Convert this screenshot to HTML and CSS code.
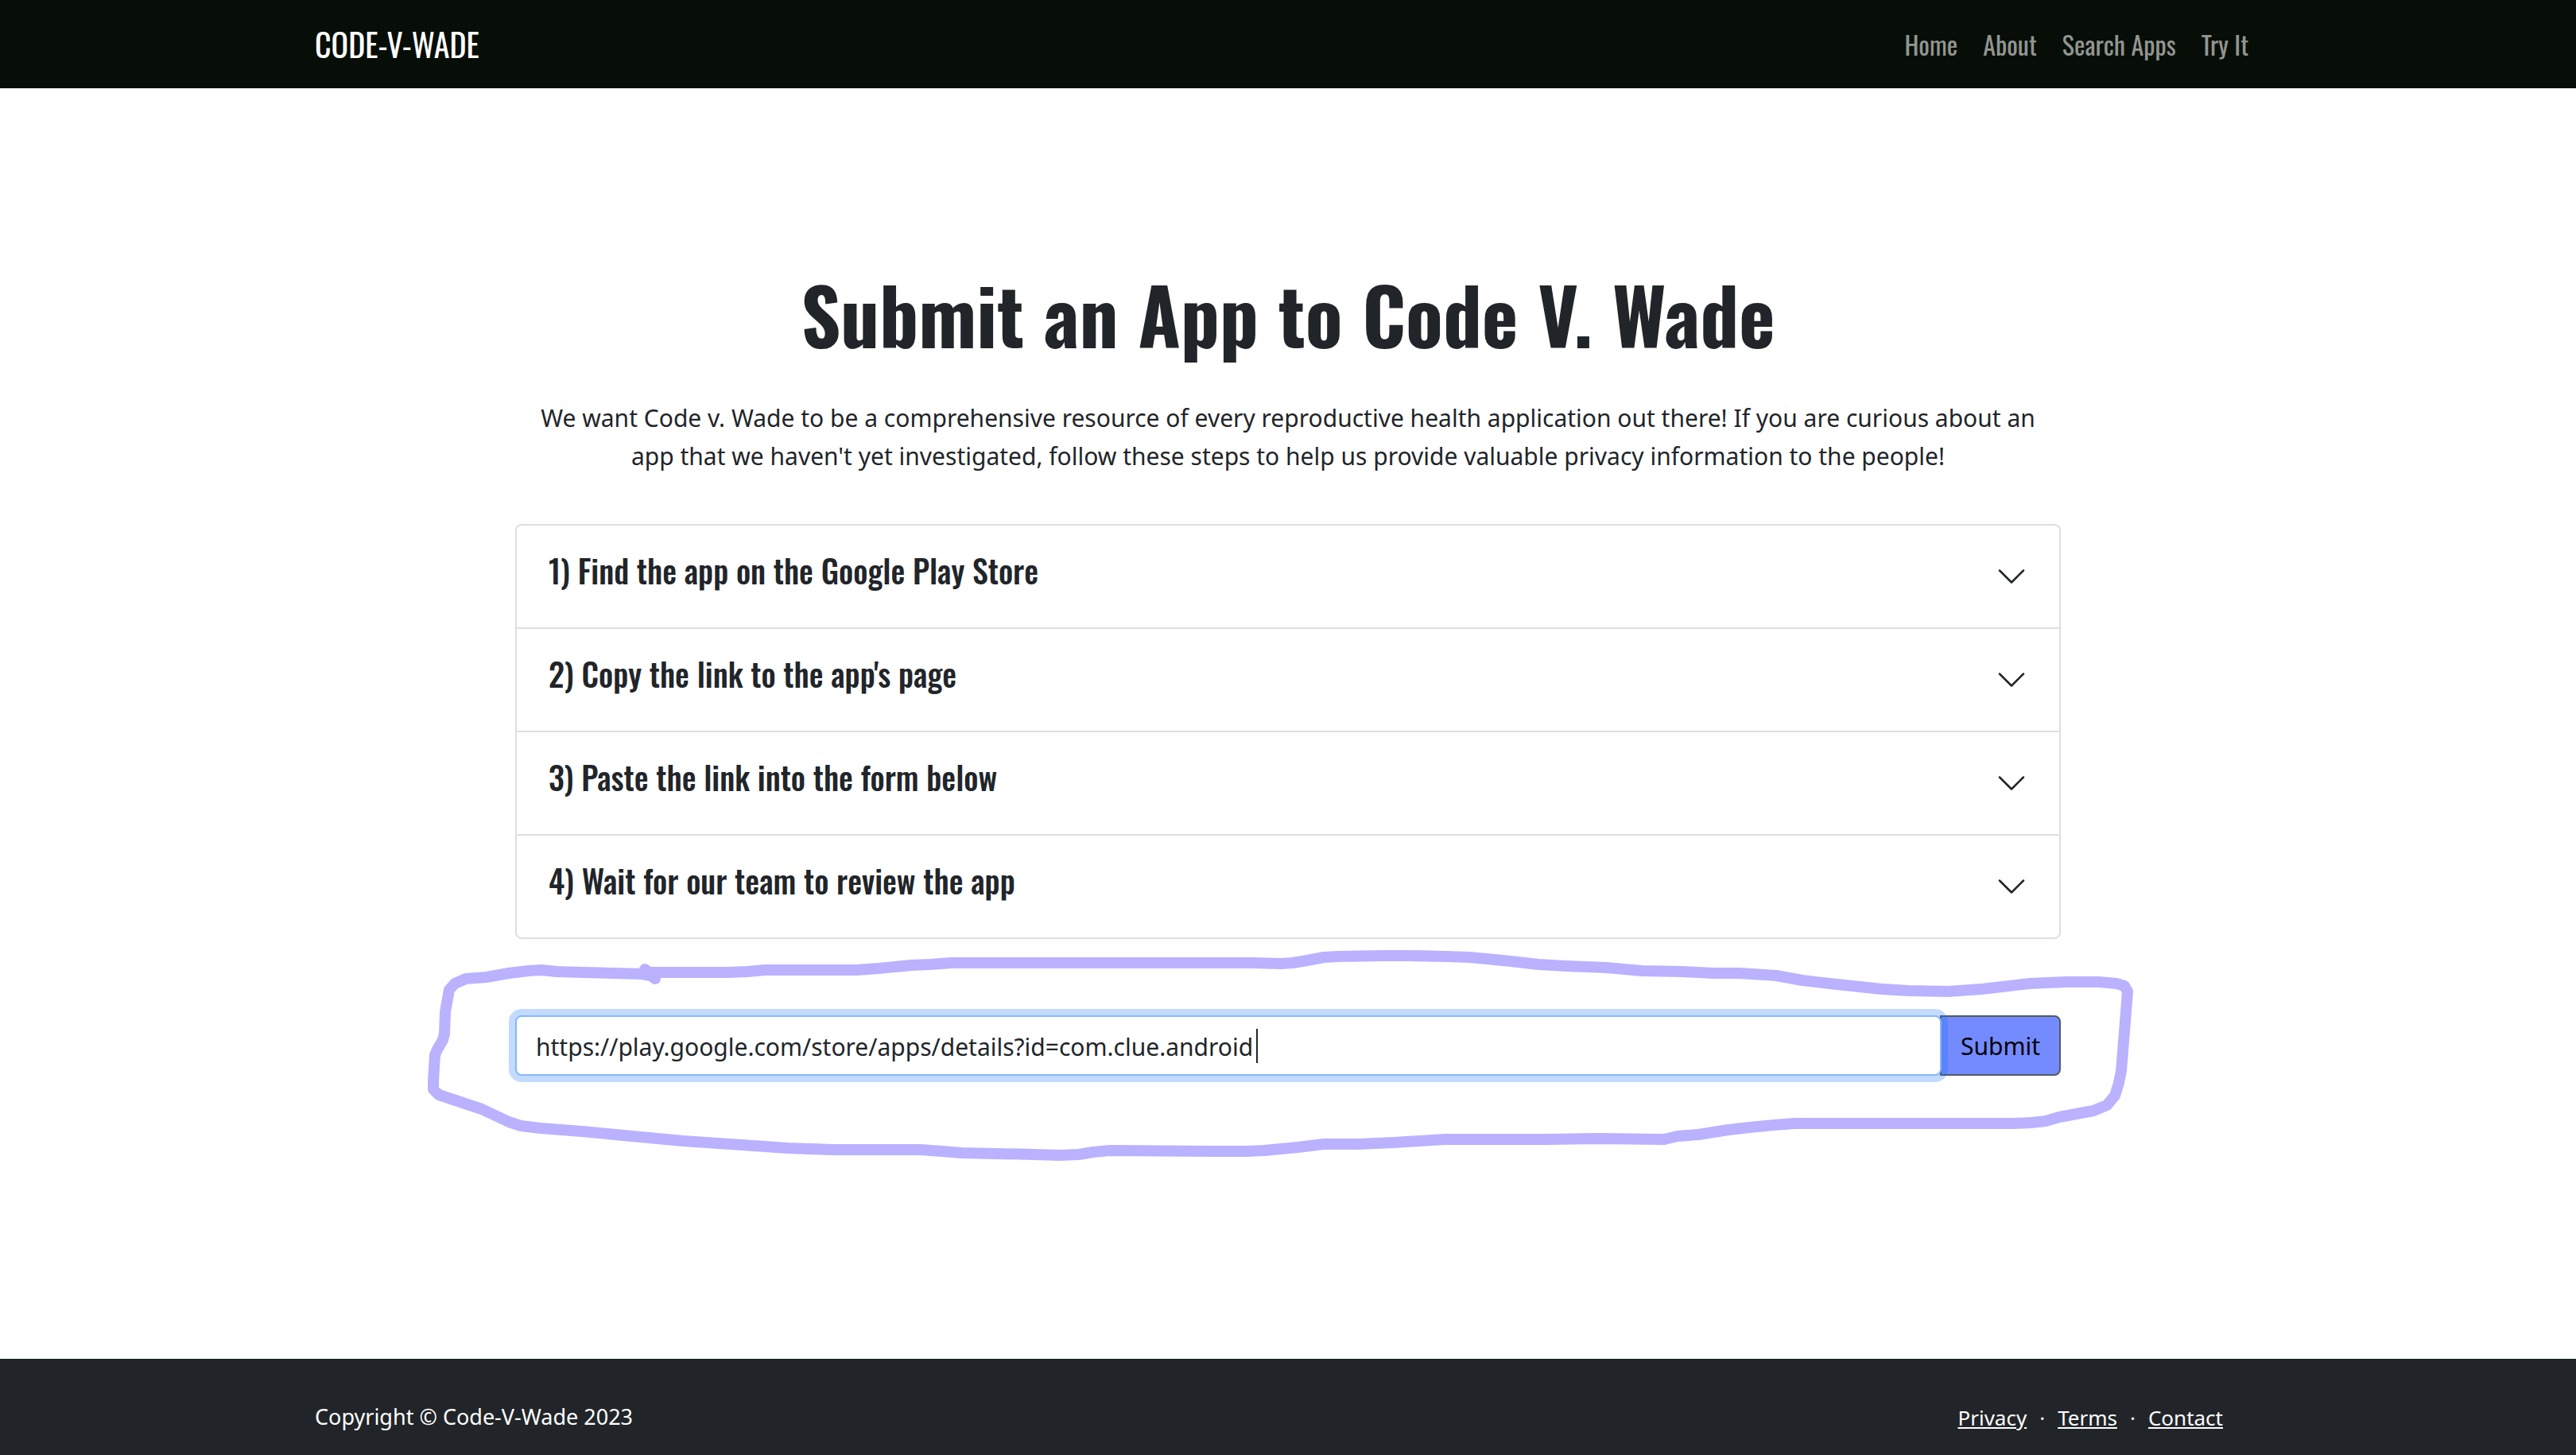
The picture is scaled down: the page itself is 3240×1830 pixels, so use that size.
FILE: index.html
```html
<!DOCTYPE html>
<html lang="en">
<head>
  <meta charset="utf-8">
  <meta name="viewport" content="width=device-width, initial-scale=1">
  <title>Submit an App - Code-V-Wade</title>
  <link rel="stylesheet" href="styles.css">
</head>
<body>
  <header class="navbar">
    <div class="container navbar-inner">
      <a class="brand" href="#">CODE-V-WADE</a>
      <nav class="nav-links">
        <a href="#">Home</a>
        <a href="#">About</a>
        <a href="#">Search Apps</a>
        <a href="#">Try It</a>
      </nav>
    </div>
  </header>

  <main class="content">
    <h1 class="title">Submit an App to Code V. Wade</h1>
    <p class="intro">We want Code v. Wade to be a comprehensive resource of every reproductive health application out there! If you are curious about an<br>app that we haven't yet investigated, follow these steps to help us provide valuable privacy information to the people!</p>

    <div class="accordion">
      <button class="accordion-item" type="button" aria-expanded="false">
        <span class="step">1) Find the app on the Google Play Store</span>
        <svg class="chevron" viewBox="0 0 16 16" aria-hidden="true"><path d="M2 5l6 6 6-6"/></svg>
      </button>
      <button class="accordion-item" type="button" aria-expanded="false">
        <span class="step">2) Copy the link to the app's page</span>
        <svg class="chevron" viewBox="0 0 16 16" aria-hidden="true"><path d="M2 5l6 6 6-6"/></svg>
      </button>
      <button class="accordion-item" type="button" aria-expanded="false">
        <span class="step">3) Paste the link into the form below</span>
        <svg class="chevron" viewBox="0 0 16 16" aria-hidden="true"><path d="M2 5l6 6 6-6"/></svg>
      </button>
      <button class="accordion-item" type="button" aria-expanded="false">
        <span class="step">4) Wait for our team to review the app</span>
        <svg class="chevron" viewBox="0 0 16 16" aria-hidden="true"><path d="M2 5l6 6 6-6"/></svg>
      </button>
    </div>

    <form class="submit-form">
      <input class="link-input" type="text" name="link" aria-label="Link to the app's page" value="https://play.google.com/store/apps/details?id=com.clue.android">
      <span class="caret" aria-hidden="true"></span>
      <button class="submit-button" type="submit">Submit</button>
      <svg class="highlight" viewBox="536 1190 2148 274" preserveAspectRatio="none" aria-hidden="true">
        <polyline points="811,1219 816,1223 916,1223 940,1222 962,1220 1077,1220 1105,1218 1146,1214 1170,1213 1197,1211 1574,1211 1612,1212 1626,1211 1644,1208 1665,1204 1683,1203 1740,1202 1772,1202 1820,1203 1848,1204 1870,1206 1900,1209 1935,1213 1970,1215 2021,1217 2065,1221 2116,1222 2155,1224 2187,1224 2234,1227 2267,1233 2310,1238 2367,1244 2400,1246 2450,1247 2493,1244 2553,1237 2575,1236 2600,1235 2640,1235 2662,1237 2672,1240 2676,1247 2673,1285 2668,1347 2665,1362 2660,1378 2650,1390 2633,1397 2590,1405 2573,1410 2555,1412 2533,1413 2257,1413 2231,1415 2200,1418 2174,1421 2136,1427 2110,1429 2093,1433 2008,1432 1944,1433 1817,1433 1753,1437 1708,1439 1664,1439 1632,1443 1590,1447 1568,1448 1530,1448 1396,1447 1375,1449 1357,1452 1332,1453 1300,1452 1209,1450 1185,1448 1157,1446 1048,1446 991,1444 933,1440 859,1435 795,1429 732,1423 680,1419 655,1416 640,1411 606,1395 552,1377 545,1370 545,1360 547,1327 550,1320 557,1308 559,1300 560,1273 565,1245 572,1237 586,1231 612,1229 640,1224 665,1221 681,1220 700,1222 732,1223 807,1225 818,1227 824,1231"/>
      </svg>
    </form>
  </main>

  <footer class="footer">
    <div class="container footer-inner">
      <div class="copyright">Copyright © Code-V-Wade 2023</div>
      <div class="footer-links">
        <a href="#">Privacy</a>
        <span>·</span>
        <a href="#">Terms</a>
        <span>·</span>
        <a href="#">Contact</a>
      </div>
    </div>
  </footer>
</body>
</html>
```
FILE: styles.css
```css
* {
  box-sizing: border-box;
}

body {
  display: flex;
  flex-direction: column;
  min-height: 100vh;
  margin: 0;
  color: #212529;
  background: #fff;
  font-family: "Segoe UI", "Noto Sans", sans-serif;
  font-size: 30px;
  line-height: 48px;
}

.container {
  width: 100%;
  max-width: 2640px;
  margin: 0 auto;
  padding: 0 96px;
  display: flex;
  justify-content: space-between;
}

.navbar {
  padding: 16px 0;
  background: #070e07;
}

.navbar-inner {
  align-items: center;
}

.brand,
.nav-links,
.title,
.step {
  font-family: "Oswald", "Liberation Sans Narrow", "Roboto", sans-serif;
}

.brand {
  color: #fff;
  font-size: 40px;
  line-height: 79px;
  text-decoration: none;
}

.nav-links {
  display: flex;
  gap: 32px;
  padding-right: 16px;
  font-size: 32px;
}

.nav-links a {
  color: #919591;
  text-decoration: none;
}

.content {
  flex: 1;
  width: 60%;
  margin: 0 auto;
  padding: 225px 0 96px;
}

.title {
  margin: 0 0 50px;
  font-size: 97px;
  font-weight: 700;
  line-height: 116px;
  text-align: center;
}

.intro {
  margin: 0 -24px 61px;
  text-align: center;
}

.accordion {
  display: flex;
  flex-direction: column;
  border: 2px solid #dedfe0;
  border-radius: 8px;
}

.accordion-item {
  display: flex;
  align-items: center;
  justify-content: space-between;
  height: 130px;
  padding: 0 40px;
  border: 0;
  border-bottom: 2px solid #dedfe0;
  background: none;
  color: inherit;
  text-align: left;
}

.accordion-item:last-child {
  height: 128px;
  border-bottom: 0;
}

.step {
  padding-bottom: 16px;
  font-size: 40px;
  font-weight: 500;
  line-height: 48px;
}

.chevron {
  width: 40px;
  height: 40px;
  fill: none;
  stroke: #212529;
  stroke-linecap: round;
  stroke-linejoin: round;
}

.submit-form {
  position: relative;
  display: flex;
  margin-top: 96px;
}

.link-input {
  position: relative;
  z-index: 1;
  flex: 1;
  min-width: 0;
  height: 76px;
  padding: 2px 24px 0;
  border: 2px solid #86b7fe;
  border-radius: 8px;
  outline: 0;
  box-shadow: 0 0 0 8px rgba(13, 110, 253, 0.25);
  background: #fff;
  color: #212529;
  font: inherit;
}

.caret {
  position: absolute;
  z-index: 1;
  top: 17px;
  left: 932px;
  width: 2px;
  height: 43px;
  background: #212529;
}

.submit-button {
  width: 152px;
  height: 76px;
  margin-left: -2px;
  padding: 2px 0 0;
  border: 2px solid #535b62;
  border-radius: 0 8px 8px 0;
  background: #748bff;
  color: #000;
  font: inherit;
}

.highlight {
  position: absolute;
  z-index: 2;
  top: -87px;
  left: -112px;
  width: calc(100% + 204px);
  height: 274px;
  fill: none;
  stroke: #bab2ff;
  stroke-width: 14px;
  stroke-linecap: round;
  stroke-linejoin: round;
  pointer-events: none;
}

.footer {
  padding: 49px 0 24px;
  background: #212529;
  color: #fff;
  font-size: 27px;
}

.footer-inner {
  align-items: center;
}

.footer-links {
  display: flex;
  gap: 16px;
  padding-top: 2px;
  padding-right: 48px;
  font-size: 26px;
  line-height: 46px;
}

.footer-links a {
  color: #fff;
}
```
